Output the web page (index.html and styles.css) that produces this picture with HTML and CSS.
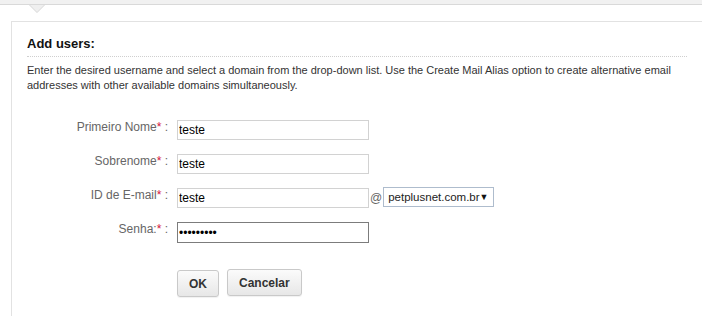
FILE: index.html
```html
<!DOCTYPE html>
<html>
<head>
<meta charset="utf-8">
<link rel="stylesheet" href="styles.css">
</head>
<body>
<div class="topbar">
  <svg class="notch" width="16" height="9" viewBox="0 0 16 9"><polygon points="0,0 16,0 8,8" fill="#efefef"/><polyline points="0.5,0 8,7.5 15.5,0" fill="none" stroke="#dadada" stroke-width="1"/></svg>
</div>
<div class="panel">
  <h2 class="title">Add users:</h2>
  <p class="intro">Enter the desired username and select a domain from the drop-down list. Use the Create Mail Alias option to create alternative email addresses with other available domains simultaneously.</p>
  <form class="form">
    <div class="row">
      <label class="label">Primeiro Nome<span class="req">*</span> :</label>
      <input class="field" type="text" value="teste">
    </div>
    <div class="row">
      <label class="label">Sobrenome<span class="req">*</span> :</label>
      <input class="field" type="text" value="teste">
    </div>
    <div class="row">
      <label class="label">ID de E-mail<span class="req">*</span> :</label>
      <input class="field" type="text" value="teste">
      <span class="at">@</span>
      <div class="select"><span>petplusnet.com.br</span><span class="arrow">▼</span></div>
    </div>
    <div class="row">
      <label class="label">Senha:<span class="req">*</span> :</label>
      <input class="field focus" type="password" value="123456789">
    </div>
    <div class="actions">
      <button type="button" class="btn ok">OK</button>
      <button type="button" class="btn">Cancelar</button>
    </div>
  </form>
</div>
</body>
</html>
```
FILE: styles.css
```css
html, body {
  margin: 0;
  padding: 0;
  background: #fff;
  font-family: "Liberation Sans", Arial, sans-serif;
  height: 316px;
  overflow: hidden;
}
.topbar {
  position: relative;
  height: 4px;
  background: #f1f1f1;
  border-bottom: 1px solid #d9d9d9;
}
.notch {
  position: absolute;
  left: 29px;
  top: 5px;
  display: block;
}
.panel {
  margin: 16px 0 0 11px;
  border-left: 1px solid #e2e2e2;
  border-top: 1px solid #e2e2e2;
  padding: 14px 15px 0 15px;
  height: 280px;
  overflow: hidden;
}
.title {
  margin: 0;
  font-size: 13px;
  line-height: 16px;
  font-weight: bold;
  color: #111;
  padding-bottom: 4px;
  border-bottom: 1px dotted #cfcfcf;
}
.intro {
  margin: 6px 0 0 0;
  font-size: 11px;
  line-height: 15px;
  color: #333;
}
.form {
  margin-top: 27px;
}
.row {
  display: flex;
  align-items: flex-start;
  height: 20px;
  margin-bottom: 14px;
}
.label {
  width: 141px;
  margin-right: 9px;
  text-align: right;
  font-size: 12px;
  line-height: 14px;
  color: #666;
}
.req {
  color: #d4163c;
}
.field {
  box-sizing: border-box;
  width: 192px;
  height: 20px;
  margin: 0;
  border: 1px solid #d2d2d2;
  padding: 0 1px;
  font-family: "Liberation Sans", Arial, sans-serif;
  font-size: 12px;
  color: #000;
  outline: none;
  background: #fff;
}
.field.focus {
  border-color: #7c7c7c;
  height: 21px;
}
.at {
  margin: 0 1px;
  font-size: 12px;
  line-height: 20px;
  color: #666;
}
.select {
  box-sizing: border-box;
  width: 111px;
  height: 20px;
  margin-top: -1px;
  border: 1px solid #aebccd;
  padding: 0 5px 0 4px;
  display: flex;
  align-items: center;
  justify-content: space-between;
  font-size: 11.5px;
  color: #222;
  white-space: nowrap;
}
.arrow {
  font-size: 9px;
  color: #111;
}
.actions {
  padding-left: 150px;
  margin-top: 27px;
  display: flex;
  align-items: flex-start;
  gap: 8px;
}
.btn {
  box-sizing: border-box;
  height: 27px;
  padding: 0 11px;
  border: 1px solid #c9c9c9;
  border-radius: 3px;
  background: linear-gradient(#fbfbfb, #e7e7e7);
  box-shadow: 0 1px 1px rgba(0,0,0,0.06);
  font-family: "Liberation Sans", Arial, sans-serif;
  font-weight: bold;
  font-size: 12px;
  color: #333;
}
.btn.ok {
  margin-top: 1px;
}
```
